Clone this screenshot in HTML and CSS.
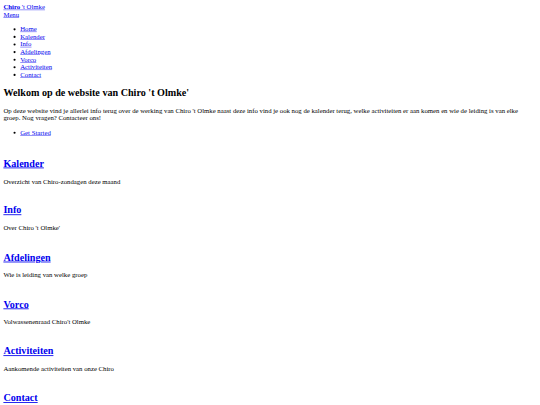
FILE: index.html
```html
<!DOCTYPE html>
<html lang="nl">
<head>
<meta charset="utf-8">
<title>Chiro 't Olmke</title>
<link rel="stylesheet" href="styles.css">
</head>
<body class="page">
<div class="canvas">
<header class="site-header">
  <a class="brand" href="#"><strong>Chiro</strong> 't Olmke</a><br>
  <a class="menu-toggle" href="#">Menu</a>
  <ul class="nav">
    <li><a href="#">Home</a></li>
    <li><a href="#">Kalender</a></li>
    <li><a href="#">Info</a></li>
    <li><a href="#">Afdelingen</a></li>
    <li><a href="#">Vorco</a></li>
    <li><a href="#">Activiteiten</a></li>
    <li><a href="#">Contact</a></li>
  </ul>
</header>
<section class="intro">
  <h1 class="title">Welkom op de website van Chiro 't Olmke'</h1>
  <p class="lead">Op deze website vind je allerlei info terug over de werking van Chiro 't Olmke naast deze info vind je ook nog de kalender terug, welke activiteiten er aan komen en wie de leiding is van elke groep. Nog vragen? Contacteer ons!</p>
  <ul class="actions"><li><a href="#">Get Started</a></li></ul>
</section>
<section class="feature">
  <h2 class="feature-title"><a href="#">Kalender</a></h2>
  <p class="feature-text">Overzicht van Chiro-zondagen deze maand</p>
</section>
<section class="feature">
  <h2 class="feature-title"><a href="#">Info</a></h2>
  <p class="feature-text">Over Chiro 't Olmke'</p>
</section>
<section class="feature">
  <h2 class="feature-title"><a href="#">Afdelingen</a></h2>
  <p class="feature-text">Wie is leiding van welke groep</p>
</section>
<section class="feature">
  <h2 class="feature-title"><a href="#">Vorco</a></h2>
  <p class="feature-text">Volwassenenraad Chiro't Olmke</p>
</section>
<section class="feature">
  <h2 class="feature-title"><a href="#">Activiteiten</a></h2>
  <p class="feature-text">Aankomende activiteiten van onze Chiro</p>
</section>
<section class="feature">
  <h2 class="feature-title"><a href="#">Contact</a></h2>
  <p class="feature-text">Neem contact met ons op</p>
</section>
</div>
</body>
</html>
```
FILE: styles.css
```css
html {
  overflow: hidden;
}
.page {
  margin: 0;
  background: #fff;
}
.canvas {
  width: 1280px;
  box-sizing: border-box;
  padding: 8px;
  transform: scale(0.421875);
  transform-origin: 0 0;
  font-family: "Liberation Serif", "Times New Roman", serif;
  font-size: 16px;
  color: #000;
}
a {
  color: #0000ee;
}
.nav,
.actions {
  margin: 16px 0;
  padding-left: 40px;
}
.intro {
  padding-bottom: 4.7px;
}
.title {
  font-size: 24px;
  margin: 19.92px 0;
}
.lead,
.feature-text {
  margin: 16px 0;
}
.feature {
  padding-top: 10.5px;
}
.feature-title {
  font-size: 24px;
  margin: 19.92px 0;
}
```
